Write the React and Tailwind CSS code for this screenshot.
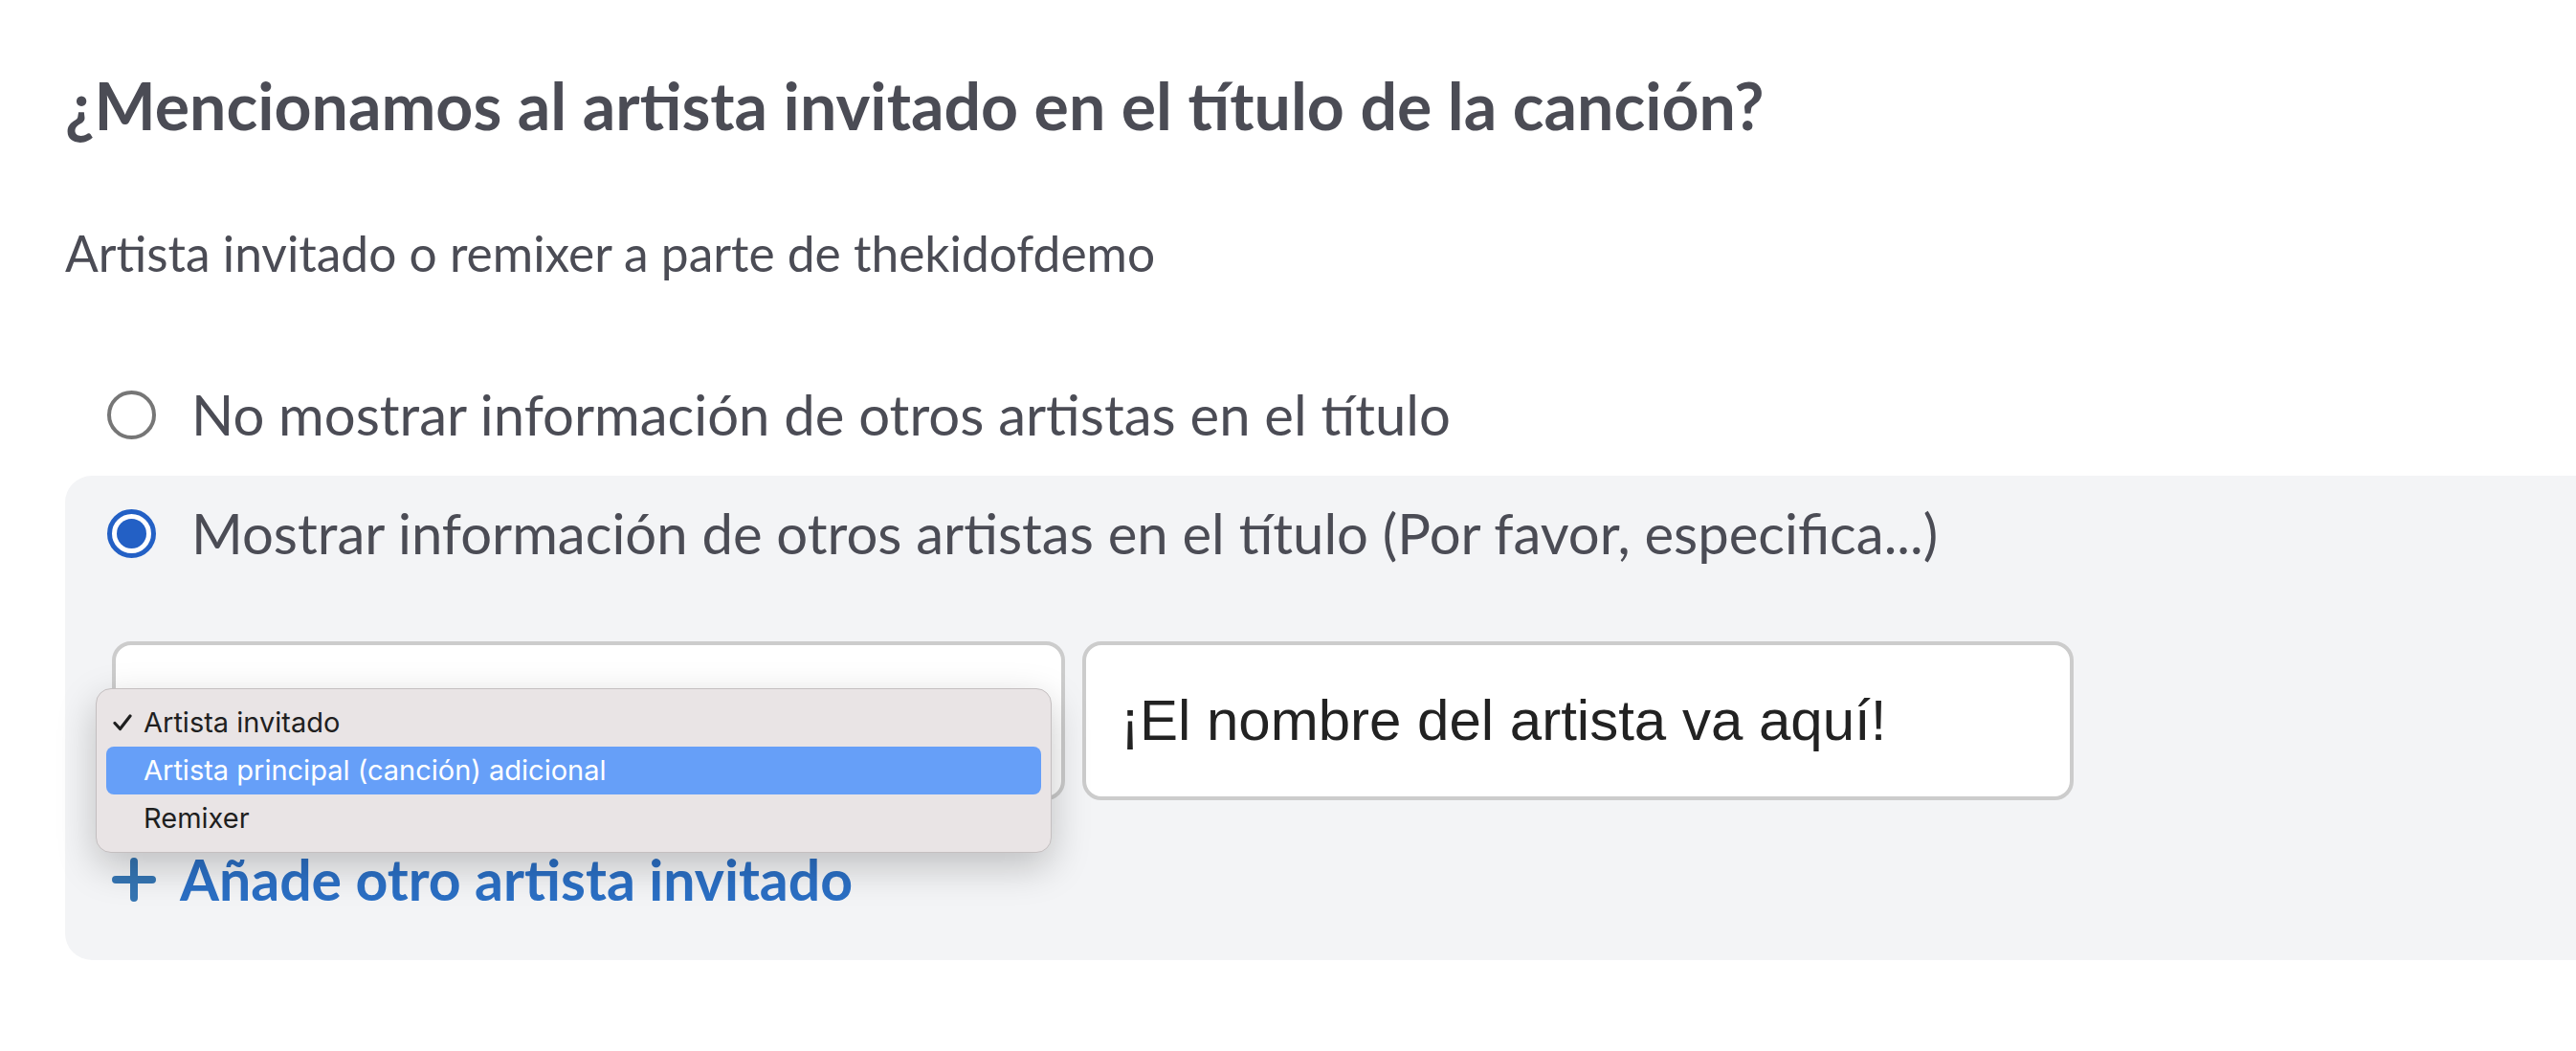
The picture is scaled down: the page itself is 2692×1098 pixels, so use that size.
import { useState } from "react";

const lato = { fontFamily: "Lato, 'Noto Sans', sans-serif" };

function Radio({ checked }) {
  if (checked) {
    return (
      <span className="flex h-[51px] w-[51px] shrink-0 items-center justify-center rounded-full border-[5px] border-[#2360c5] bg-white">
        <span className="h-[31px] w-[31px] rounded-full bg-[#2360c5]" />
      </span>
    );
  }
  return <span className="h-[51px] w-[51px] shrink-0 rounded-full border-[4px] border-[#767676] bg-white" />;
}

const roles = ["Artista invitado", "Artista principal (canción) adicional", "Remixer"];

function RoleMenu() {
  return (
    <div
      className="absolute left-[-21px] top-[45px] z-10 w-[999px] rounded-[16px] border border-[#c4bfc0] bg-[#e9e4e5] p-[10px] shadow-[0_14px_40px_rgba(0,0,0,0.22)]"
      style={{ fontFamily: "Inter, 'Noto Sans', sans-serif" }}
    >
      {roles.map((r, i) => (
        <div
          key={r}
          className={
            i === 1
              ? "flex h-[50px] items-center rounded-[8px] bg-[#669ff8] text-[29px] text-white"
              : "flex h-[50px] items-center text-[29px] text-[#1f1f1f]"
          }
        >
          <span className="flex w-[39px] justify-start pl-[7px]">
            {i === 0 && (
              <svg width="20" height="18" viewBox="0 0 20 18">
                <path d="M2 9.5l5.5 6L18 2" fill="none" stroke="#1f1f1f" strokeWidth="3.2" strokeLinecap="round" strokeLinejoin="round" />
              </svg>
            )}
          </span>
          <span>{r}</span>
        </div>
      ))}
    </div>
  );
}

export default function App() {
  const [choice] = useState(1);

  return (
    <div className="min-h-[1098px] w-full overflow-hidden bg-white pl-[68px]" style={lato}>
      <h2 className="pt-[69px] text-[68px] font-bold leading-[1.2] text-[#4b4c55]">
        ¿Mencionamos al artista invitado en el título de la canción?
      </h2>
      <p className="mt-[83px] text-[51.5px] leading-[1.2] text-[#4b4c55]">
        Artista invitado o remixer a parte de thekidofdemo
      </p>

      {/* Options */}
      <div className="mt-[78px] flex flex-col gap-[4px]">
        <label className="flex items-center gap-[37px] px-[44px] py-[24px] text-[58px] leading-[1.24] text-[#4b4c55]">
          <Radio checked={choice === 0} />
          <span>No mostrar información de otros artistas en el título</span>
        </label>

        <div className="mr-[-60px] rounded-[28px] bg-[#f3f4f6] pb-[46px] pt-[24px]">
          <label className="flex items-center gap-[37px] px-[44px] text-[58px] leading-[1.24] text-[#4b4c55]">
            <Radio checked={choice === 1} />
            <span>Mostrar información de otros artistas en el título (Por favor, especifica...)</span>
          </label>

          <div className="mt-[77px] flex gap-[18px] pl-[49px]">
            <div className="relative h-[166px] w-[996px] rounded-[20px] border-[4px] border-[#cccccc] bg-white">
              <RoleMenu />
            </div>
            <div
              className="flex h-[166px] w-[1036px] items-center rounded-[20px] border-[4px] border-[#cccccc] bg-white px-[36px] text-[60px] text-[#222222]"
              style={{ fontFamily: "'Liberation Sans', Arial, sans-serif" }}
            >
              ¡El nombre del artista va aquí!
            </div>
          </div>

          <a href="#" className="mt-[46px] flex items-center gap-[25px] pl-[49px] text-[59px] font-bold leading-[1.26] text-[#2b6fc4]">
            <svg width="46" height="46" viewBox="0 0 46 46" className="shrink-0">
              <path d="M23 4v38M4 23h38" stroke="#3575b3" strokeWidth="8" strokeLinecap="round" />
            </svg>
            <span>Añade otro artista invitado</span>
          </a>
        </div>
      </div>
    </div>
  );
}
